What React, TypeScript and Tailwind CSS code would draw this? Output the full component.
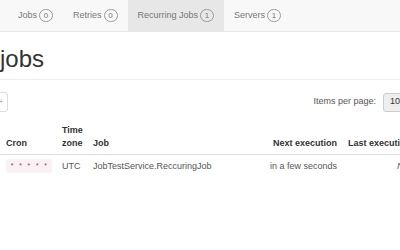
import React from "react";

function Badge({ n }: { n: number }) {
  return (
    <span className="ml-[2px] inline-flex h-[13px] w-[14px] items-center justify-center rounded-full border border-[#999] text-[8px] leading-none text-[#777]">
      {n}
    </span>
  );
}

const navItems = [
  { label: "Jobs", count: 0 },
  { label: "Retries", count: 0 },
  { label: "Recurring Jobs", count: 1, active: true },
  { label: "Servers", count: 1 },
];

function App() {
  return (
    <div className="h-[250px] w-[400px] overflow-hidden bg-white font-['Liberation_Sans',Arial,sans-serif] text-[9px] text-[#333]">
      {/* top nav */}
      <nav className="flex h-[32px] border-b border-[#e7e7e7] bg-[#f8f8f8] pl-[8px]">
        {navItems.map((item) => (
          <div
            key={item.label}
            className={
              "flex items-center px-[10px] text-[#777] " +
              (item.active ? "bg-[#e7e7e7] text-[#555]" : "")
            }
          >
            <span>{item.label}</span>
            <Badge n={item.count} />
          </div>
        ))}
      </nav>

      {/* page header */}
      <h1 className="mt-[13px] border-b border-[#eee] pb-[6px] text-[24px] leading-[28px] font-normal text-[#333]">
        jobs
      </h1>

      {/* toolbar */}
      <div className="mr-[-13px] mt-[12px] flex items-center justify-between">
        <div className="ml-[-22px] flex h-[20px] w-[30px] items-center justify-end rounded-[3px] border border-[#ddd] bg-white pr-[4px] text-[7px] text-[#999]">
          +
        </div>
        <div className="flex items-center">
          <span className="text-[#555]">Items per page:</span>
          <div className="ml-[7px] flex h-[19px] w-[30px] items-center rounded-l-[3px] border border-[#ccc] bg-[#eee] pl-[6px] text-[#333]">
            10
          </div>
        </div>
      </div>

      {/* table */}
      <table className="mt-[12px] w-[420px] table-fixed border-collapse text-left">
        <colgroup>
          <col className="w-[56px]" />
          <col className="w-[31px]" />
          <col className="w-[180px]" />
          <col className="w-[76px]" />
          <col className="w-[77px]" />
        </colgroup>
        <thead>
          <tr className="border-b border-[#ddd] align-bottom font-bold leading-[13px] text-[#333]">
            <th className="pb-[4px] pl-[6px]">Cron</th>
            <th className="pb-[4px] pl-[6px]">
              Time
              <br />
              zone
            </th>
            <th className="pb-[4px] pl-[6px]">Job</th>
            <th className="pb-[4px] pr-[6px] text-right whitespace-nowrap">Next execution</th>
            <th className="pb-[4px] pl-[5px] whitespace-nowrap">Last execution</th>
          </tr>
        </thead>
        <tbody>
          <tr className="leading-[13px] text-[#555]">
            <td className="pt-[4px] pl-[6px]">
              <code className="inline-block rounded-[3px] bg-[#f9f2f4] px-[4px] font-['Liberation_Mono',monospace] text-[7px] leading-[14px] text-[#c7254e]">
                * * * * *
              </code>
            </td>
            <td className="pt-[4px] pl-[6px]">UTC</td>
            <td className="pt-[4px] pl-[6px] whitespace-nowrap">JobTestService.ReccuringJob</td>
            <td className="pt-[4px] pr-[6px] text-right whitespace-nowrap">in a few seconds</td>
            <td className="pt-[4px] pr-[8px] text-right italic">N/A</td>
          </tr>
        </tbody>
      </table>
    </div>
  );
}

export default App;
